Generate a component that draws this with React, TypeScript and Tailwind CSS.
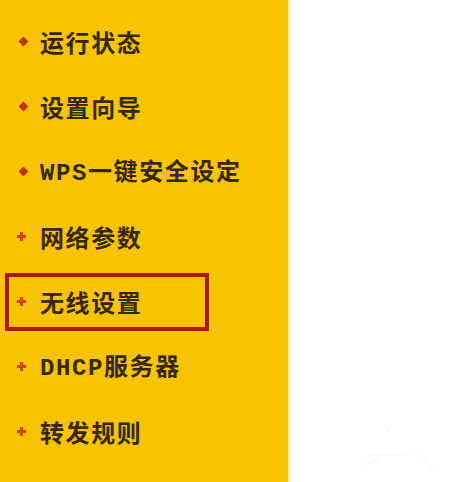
import React from 'react';

type Item = { label: React.ReactNode; bullet: 'dot' | 'plus'; active?: boolean };

const mono = { fontFamily: '"Liberation Mono", monospace' };

const items: Item[] = [
  { label: '运行状态', bullet: 'dot' },
  { label: '设置向导', bullet: 'dot' },
  { label: <><span style={mono}>WPS</span>一键安全设定</>, bullet: 'dot' },
  { label: '网络参数', bullet: 'plus' },
  { label: '无线设置', bullet: 'plus', active: true },
  { label: <><span style={mono}>DHCP</span>服务器</>, bullet: 'plus' },
  { label: '转发规则', bullet: 'plus' },
];

// Diamond bullet for plain links, red cross for expandable groups
const Bullet: React.FC<{ kind: 'dot' | 'plus'; inset?: boolean }> = ({ kind, inset }) =>
  kind === 'dot' ? (
    <span className="w-[7px] h-[7px] bg-[#c4301c] rotate-45 shrink-0 ml-[20px] mr-[13px]"></span>
  ) : (
    <svg
      width="9"
      height="9"
      viewBox="0 0 9 9"
      className={`shrink-0 mr-[14px] ${inset ? 'ml-[8px]' : 'ml-[17px]'}`}
    >
      <path d="M3 0h3v3h3v3H6v3H3V6H0V3h3z" fill="#e23a1c" />
    </svg>
  );

const App: React.FC = () => {
  return (
    <div className="w-[450px] h-[482px] flex bg-white overflow-hidden">
      <nav className="w-[290px] h-full bg-[#f8c300] pt-[9px] border-r-2 border-[#fde9a6]">
        {items.map((item, i) => (
          <div key={i} className="h-[65px] flex items-center">
            <div
              className={`flex items-center ${
                item.active ? 'w-[204px] h-[58px] ml-[5px] border-4 border-[#b01410]' : 'w-full'
              }`}
            >
              <Bullet kind={item.bullet} inset={item.active} />
              <span
                className="text-[24px] font-bold text-[#36290a] tracking-[1.6px] leading-none whitespace-nowrap"
                style={{ fontFamily: '"Noto Sans CJK SC", sans-serif' }}
              >
                {item.label}
              </span>
            </div>
          </div>
        ))}
      </nav>
      <div className="flex-1 relative">
        {/* faint watermark in the corner */}
        <svg className="absolute left-[60px] top-[420px]" width="100" height="50" viewBox="0 0 100 50">
          <path d="M35 5l5 8M20 35h35M60 28l25 22M15 45l15-8" stroke="#f8f8f8" strokeWidth="1.5" fill="none" />
        </svg>
      </div>
    </div>
  );
};

export default App;
